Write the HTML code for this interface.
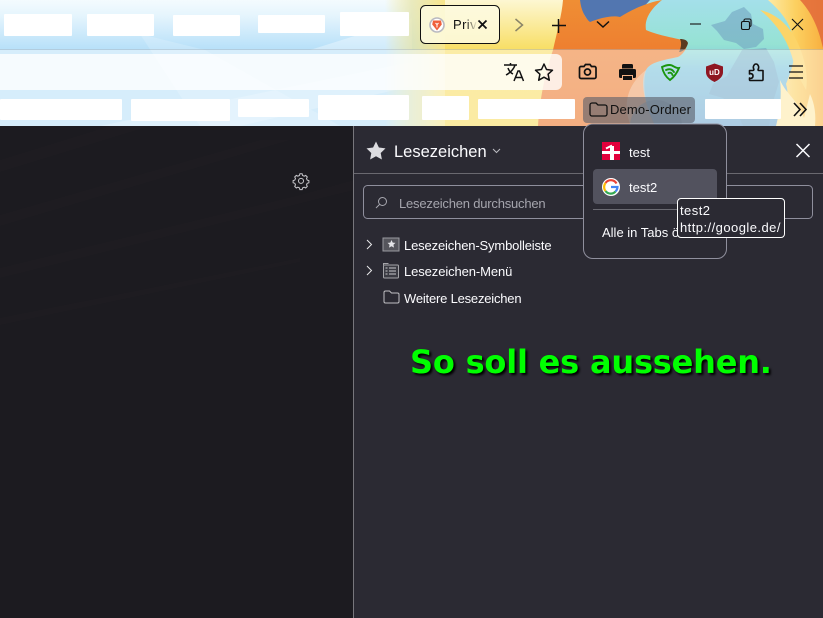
<!DOCTYPE html>
<html><head><meta charset="utf-8"><style>
html,body{margin:0;padding:0;width:823px;height:618px;overflow:hidden;background:#1c1b22}
body{position:relative;font-family:"Liberation Sans","DejaVu Sans",sans-serif;color:#fbfbfe}
svg{position:absolute;left:0;top:0}
.t{position:absolute;white-space:nowrap;font-size:13px;line-height:16px}
</style></head><body>
<svg width="823" height="618" viewBox="0 0 823 618">
<defs>
<linearGradient id="sky" x1="0" y1="0" x2="0" y2="1"><stop offset="0" stop-color="#f4fbfe"/><stop offset=".12" stop-color="#e6f5fd"/><stop offset=".38" stop-color="#b9e1f9"/><stop offset="1" stop-color="#b9e1f9"/></linearGradient>
<linearGradient id="warm" x1="0" y1="0" x2="1" y2="0"><stop offset="0" stop-color="#f8e890" stop-opacity="0"/><stop offset=".45" stop-color="#e6e4a8" stop-opacity=".75"/><stop offset="1" stop-color="#f9e68a"/></linearGradient>
<linearGradient id="warm2" x1="0" y1="0" x2="0" y2="1"><stop offset="0" stop-color="#fdf7d2"/><stop offset=".38" stop-color="#f8df68"/><stop offset="1" stop-color="#f9dc60"/></linearGradient>
<linearGradient id="fox" x1="0" y1="0" x2="0" y2="1"><stop offset="0" stop-color="#ef8e34"/><stop offset=".4" stop-color="#ee7f30"/><stop offset="1" stop-color="#ea7428"/></linearGradient>
<linearGradient id="globe" x1="0" y1="0" x2="0" y2="1"><stop offset="0" stop-color="#a4e0ea"/><stop offset=".35" stop-color="#96e2d4"/><stop offset=".55" stop-color="#7cc4dc"/><stop offset="1" stop-color="#74a8d0"/></linearGradient>
<linearGradient id="flame" x1="0" y1="0" x2="1" y2="0"><stop offset="0" stop-color="#feeaa4"/><stop offset=".5" stop-color="#fcd060"/><stop offset="1" stop-color="#f8b040"/></linearGradient>
</defs>
<!-- frame background -->
<rect width="823" height="126" fill="url(#sky)"/>
<path d="M140 34L205 50 340 126 200 126z" fill="#fff" opacity=".18"/>
<path d="M310 50L412 18 412 50z" fill="#fff" opacity=".35"/>
<path d="M100 126L412 62V86L240 126z" fill="#fff" opacity=".22"/>
<rect x="385" width="60" height="126" fill="url(#warm)"/>
<rect x="445" width="130" height="126" fill="url(#warm2)"/>
<!-- globe -->
<rect x="575" width="235" height="126" fill="url(#globe)"/>
<path d="M575 0H650L630 22 590 24z" fill="#5276b0"/>
<path d="M711 25l14-4 7-9 12-5 7 7 2 10 10 5 1 10-8 8-12 2-8-6-12-3-7-9zM742 50l24-2 8 14 5 20-6 20-4 24h-26l-8-18-12-10-14-4 4-10 14-8z" fill="#6f9fc0" opacity=".55"/>
<!-- fox -->
<path d="M553 50C557 32 562 14 563 0H580C581 10 585 18 590 22 600 18 612 15 620 17 634 8 650 2 662 0 652 8 644 18 646 30 660 36 676 38 686 41 689 46 684 54 678 57 664 60 650 62 646 70 640 80 643 100 655 126H538C540 96 546 70 553 50z" fill="url(#fox)"/>
<path d="M680 39c4 0 7 1 8 4-1 5-5 9-9 9 2-4 3-9 1-13z" fill="#5a3a20"/>
<path d="M646 70c-4 16-1 36 9 56h-24c-8-18-6-40 15-56z" fill="#f3c29c" opacity=".55"/>
<circle cx="656" cy="126" r="26" fill="#4f86ad" opacity=".55"/>
<!-- flames -->
<path d="M768 0C784 14 792 26 794 44 796 60 790 74 786 84 790 98 786 112 784 126H823V0z" fill="url(#flame)"/>
<path d="M760 10C778 14 792 28 800 48 806 64 808 78 806 90L795 70C792 48 780 26 760 10z" fill="#fcd468"/>
<path d="M800 0C811 12 818 26 823 48V0z" fill="#e2683a" opacity=".85"/>
<path d="M780 80C786 94 798 100 804 118L810 94C815 104 816 116 815 126H776C780 110 782 96 780 80z" fill="#fee8a8"/>
<!-- toolbar overlay -->
<rect y="50" width="823" height="76" fill="#fff" opacity=".42"/>
<rect y="49" width="823" height="1" fill="#a8b4bc" opacity=".45"/>
<!-- urlbar -->
<path d="M0 54H556a6 6 0 0 1 6 6v24a6 6 0 0 1-6 6H0z" fill="#fff" opacity=".78"/>
<!-- redaction boxes -->
<g fill="#fff">
<rect x="4" y="14" width="68" height="22" rx="1"/><rect x="87" y="14" width="67" height="22" rx="1"/><rect x="173" y="15" width="67" height="21" rx="1"/><rect x="258" y="15" width="67" height="18" rx="1"/><rect x="340" y="12" width="69" height="24" rx="1"/>
<rect x="0" y="99" width="122" height="21" rx="1"/><rect x="131" y="99" width="99" height="22" rx="1"/><rect x="238" y="99" width="71" height="18" rx="1"/><rect x="318" y="95" width="91" height="25" rx="1"/><rect x="422" y="96" width="47" height="24" rx="1"/><rect x="478" y="99" width="97" height="20" rx="1"/><rect x="705" y="99" width="76" height="20" rx="1"/>
</g>
<!-- tab -->
<rect x="420.500" y="5.500" width="79" height="38" rx="5" fill="#fdfae0" fill-opacity=".85" stroke="#111" stroke-width="1"/>
<circle cx="437" cy="25" r="7" fill="#fff" stroke="#b9b9c0" stroke-width="1.600"/>
<path d="M433 20.500h8l.8 4-4.800 6-4.800-6z" fill="#f0603c"/>
<path d="M435.500 23l1.500 1.500 1.500-1.500M437 24.500v3" stroke="#fff" stroke-width="1" fill="none"/>
<path d="M478.500 20.500l8 8M486.500 20.500l-8 8" stroke="#111" stroke-width="1.800"/>
<path d="M515.500 19l7 6-7 6" fill="none" stroke="#8a8468" stroke-width="1.500"/>
<path d="M558.500 19v14M552 25.500h14" stroke="#111" stroke-width="1.500"/>
<path d="M597 21.500l6 5.500 6-5.500" fill="none" stroke="#111" stroke-width="1.500"/>
<!-- window controls -->
<path d="M690 24h11" stroke="#222" stroke-width="1.200"/>
<rect x="741.500" y="21.500" width="8" height="8" rx="1.500" fill="none" stroke="#111" stroke-width="1.100"/>
<path d="M744 21v-1a1.500 1.500 0 0 1 1.500-1h4a1.500 1.500 0 0 1 1.500 1v5a1.500 1.500 0 0 1-1 1.500" fill="none" stroke="#111" stroke-width="1.100"/>
<path d="M792 19l11 11M803 19l-11 11" stroke="#111" stroke-width="1.100"/>
<!-- toolbar icons -->
<g fill="none" stroke="#111" stroke-width="1.500">
<path d="M504 65h13M510.500 63v2M515 65c-1 4-5 8-9 10M508 68c1 3 3 5 5 6"/>
<path d="M514 81l4-10h1.500l4 10M515.500 77.500h6.500"/>
<path d="M544 64l2.500 5.500 6 .7-4.400 4 1.200 6-5.300-3-5.300 3 1.200-6-4.400-4 6-.7z" stroke-linejoin="round"/>
<path d="M581 66.500h3l1.500-2h4.500l1.500 2h3a1.500 1.500 0 0 1 1.500 1.500v9a1.500 1.500 0 0 1-1.500 1.500h-13.500a1.500 1.500 0 0 1-1.500-1.500v-9a1.500 1.500 0 0 1 1.500-1.500z" stroke-width="1.700"/>
<circle cx="587.500" cy="72" r="3" stroke-width="1.700"/>
<path d="M750 80.500h12a1 1 0 0 0 1-1v-9h-4c-1 0-1.200-.6-.7-1.600 1-2-.3-4.900-2.300-4.900s-3.300 2.900-2.300 4.900c.5 1-.2 1.600-1.200 1.600h-3v3.500c1.500-1 3.500 0 3.500 2s-2 3-3.500 2v1.500a1 1 0 0 0 .5 1z" stroke-linejoin="round" stroke-width="1.600"/>
<path d="M789 66h14M789 72h14M789 78h14" stroke-width="1.200"/>
</g>
<path d="M622 65.500a1.500 1.500 0 0 1 1.500-1.500h8a1.500 1.500 0 0 1 1.500 1.500v3h-11zM619 70.500a1.500 1.500 0 0 1 1.500-1.500h14a1.500 1.500 0 0 1 1.500 1.500v6a1.500 1.500 0 0 1-1.500 1.500h-1.500v-3h-11v3h-1.500a1.500 1.500 0 0 1-1.500-1.500zM623 76h9v4h-9z" fill="#111"/>
<g fill="none" stroke="#1a960e" stroke-width="1.900" stroke-linecap="round">
<path d="M662 67c4-2 8-2.500 10-1.500 2 1 4 3 7 2.500-2 5-5 9-9 12-4-3-7-8-8-13z"/>
<path d="M666 70c3-1.500 6-1 8 2M668.500 73c2-.8 3.500 0 4 2"/>
</g>
<path d="M706 66.500l8.500-3 8.500 3v6c0 4-4 7.500-8.500 9.500-4.500-2-8.500-5.500-8.500-9.500z" fill="#8f1722"/>
<text x="714.500" y="75" text-anchor="middle" font-family="Liberation Sans" font-weight="bold" font-size="8" fill="#fff">uD</text>
<!-- demo folder button -->
<rect x="583" y="97" width="112" height="26" rx="4" fill="#5c5f6a" opacity=".62"/>
<path d="M590 105a2 2 0 0 1 2-2h4l2 2h7a2 2 0 0 1 2 2v7a2 2 0 0 1-2 2h-13a2 2 0 0 1-2-2z" fill="none" stroke="#111" stroke-width="1.300"/>
<path d="M794 103l6 6.500-6 6.500M800 103l6 6.500-6 6.500" fill="none" stroke="#111" stroke-width="1.600"/>
<!-- content -->
<rect y="126" width="823" height="492" fill="#1c1b20"/>
<path d="M0 160L110 126H150L0 172zM0 215L260 140 290 140 0 226zM0 268L300 195 354 180V190L0 278zM0 318L300 258V262L0 325z" fill="#212025" opacity=".35"/>
<rect x="354" y="126" width="469" height="492" fill="#2b2a33"/>
<rect x="353" y="126" width="1" height="492" fill="#77767c"/>
<rect x="354" y="173" width="469" height="1" fill="#6a6970"/>
<!-- gear -->
<path d="M299.900 173.800h2.200l.5 1.700 1.600.7 1.500-.8 1.600 1.600-.8 1.500.7 1.600 1.700.5v2.200l-1.700.5-.7 1.600.8 1.500-1.600 1.600-1.500-.8-1.600.7-.5 1.700h-2.200l-.5-1.700-1.600-.7-1.500.8-1.600-1.600.8-1.500-.7-1.600-1.700-.5v-2.200l1.700-.5.7-1.600-.8-1.500 1.600-1.600 1.500.8 1.600-.7z" fill="none" stroke="#c8c8cc" stroke-width="1"/>
<circle cx="301" cy="180.900" r="2.500" fill="none" stroke="#c8c8cc" stroke-width="1"/>
<!-- sidebar header -->
<path d="M376 141.500l2.900 6 6.600.9-4.800 4.600 1.200 6.500-5.900-3.200-5.900 3.200 1.200-6.500-4.800-4.600 6.600-.9z" fill="#dcdce0"/>
<path d="M493 149l3.500 3.500 3.500-3.500" fill="none" stroke="#bcbcc2" stroke-width="1"/>
<path d="M796.500 144l13 13M809.500 144l-13 13" stroke="#fbfbfe" stroke-width="1.500"/>
<!-- search box -->
<rect x="363.500" y="185.500" width="449" height="33" rx="4" fill="none" stroke="#8f8f9d" stroke-width="1"/>
<circle cx="382.500" cy="201.500" r="4" fill="none" stroke="#a8a8b0" stroke-width="1"/>
<path d="M379.500 204.500l-3.500 3.500" stroke="#a8a8b0" stroke-width="1"/>
<!-- tree -->
<path d="M367 240l4.500 4.500-4.500 4.500M367 266l4.500 4.500-4.500 4.500" fill="none" stroke="#e8e8ea" stroke-width="1"/>
<rect x="383" y="238" width="16" height="13" fill="#55555c" stroke="#9a9aa0" stroke-width="1"/>
<path d="M391.500 240l1.200 2.600 2.800.3-2.100 1.900.6 2.800-2.500-1.400-2.500 1.400.6-2.800-2.100-1.900 2.800-.3z" fill="#e4e4e8"/>
<rect x="383.500" y="265" width="15" height="13" rx="1" fill="#3a3a42" stroke="#a4a4a8" stroke-width="1"/>
<path d="M383.500 265v-1.500h5" fill="none" stroke="#a4a4a8"/>
<path d="M385.500 268h2M385.500 271h2M385.500 274h2M389 268h7M389 271h7M389 274h7" stroke="#c8c8cc" stroke-width="1"/>
<path d="M384 292.500a1.500 1.500 0 0 1 1.500-1.500h4l2 2h6a1.500 1.500 0 0 1 1.500 1.500v7a1.500 1.500 0 0 1-1.500 1.500h-12a1.500 1.500 0 0 1-1.500-1.500z" fill="none" stroke="#c0c0c4" stroke-width="1"/>
<!-- popup -->
<path d="M593 124H717a10 10 0 0 1 9.500 9.500V249a9.500 9.500 0 0 1-9.500 9.500H593a9.500 9.500 0 0 1-9.500-9.500V133.500A9.500 9.500 0 0 1 593 124z" fill="#2b2a33" stroke="#8f8f9d" stroke-width="1"/>
<rect x="593" y="169" width="124" height="35" rx="4" fill="#52525e"/>
<rect x="593" y="209" width="124" height="1" fill="#6a6a72"/>
<rect x="602" y="142" width="18" height="18" fill="#e2003c"/>
<path d="M612 146v14" stroke="#fff" stroke-width="4" fill="none"/>
<path d="M602 152.500h18" stroke="#fff" stroke-width="3" fill="none"/>
<path d="M606 148.500l6-3" stroke="#fff" stroke-width="2" fill="none"/>
<circle cx="611" cy="187" r="9" fill="#fff"/>
<path d="M616.500 183.500a6.500 6.500 0 0 0-11-.5" stroke="#ea4335" stroke-width="2.200" fill="none"/>
<path d="M605.500 183a6.500 6.500 0 0 0 0 8" stroke="#fbbc05" stroke-width="2.200" fill="none"/>
<path d="M605.500 191a6.500 6.500 0 0 0 10 .5" stroke="#34a853" stroke-width="2.200" fill="none"/>
<path d="M611 187h6.500a6.500 6.500 0 0 1-2 4.500" stroke="#4285f4" stroke-width="2.200" fill="none"/>
</svg>
<div class="t" style="left:453px;top:17px;color:#111;width:24px;overflow:hidden;letter-spacing:.4px;-webkit-mask-image:linear-gradient(90deg,#000 55%,transparent)">Priv</div>
<div class="t" style="left:610px;top:102px;color:#111;letter-spacing:.15px">Demo-Ordner</div>
<div class="t" style="left:394px;top:143px;font-size:16.500px;line-height:19px">Lesezeichen</div>
<div class="t" style="left:399px;top:196px;color:#a5a5ad;letter-spacing:-.2px">Lesezeichen durchsuchen</div>
<div class="t" style="left:404px;top:238px;letter-spacing:-.15px">Lesezeichen-Symbolleiste</div>
<div class="t" style="left:404px;top:264px;letter-spacing:-.1px">Lesezeichen-Menü</div>
<div class="t" style="left:404px;top:291px;letter-spacing:-.2px">Weitere Lesezeichen</div>
<div class="t" style="left:629px;top:145px">test</div>
<div class="t" style="left:629px;top:180px">test2</div>
<div class="t" style="left:602px;top:225px">Alle in Tabs öffnen</div>
<div style="position:absolute;left:677px;top:198px;width:106px;height:38px;background:#2b2a33;border:1px solid #fff;border-radius:4px"></div>
<div class="t" style="left:680px;top:202px;line-height:17px;letter-spacing:.45px">test2<br>http://google.de/</div>
<div class="t" style="left:410px;top:342px;font:bold 32px/40px 'DejaVu Sans',sans-serif;color:#0f0;text-shadow:2px 2px 2px #000;letter-spacing:-.2px">So soll es aussehen.</div>
</body></html>
